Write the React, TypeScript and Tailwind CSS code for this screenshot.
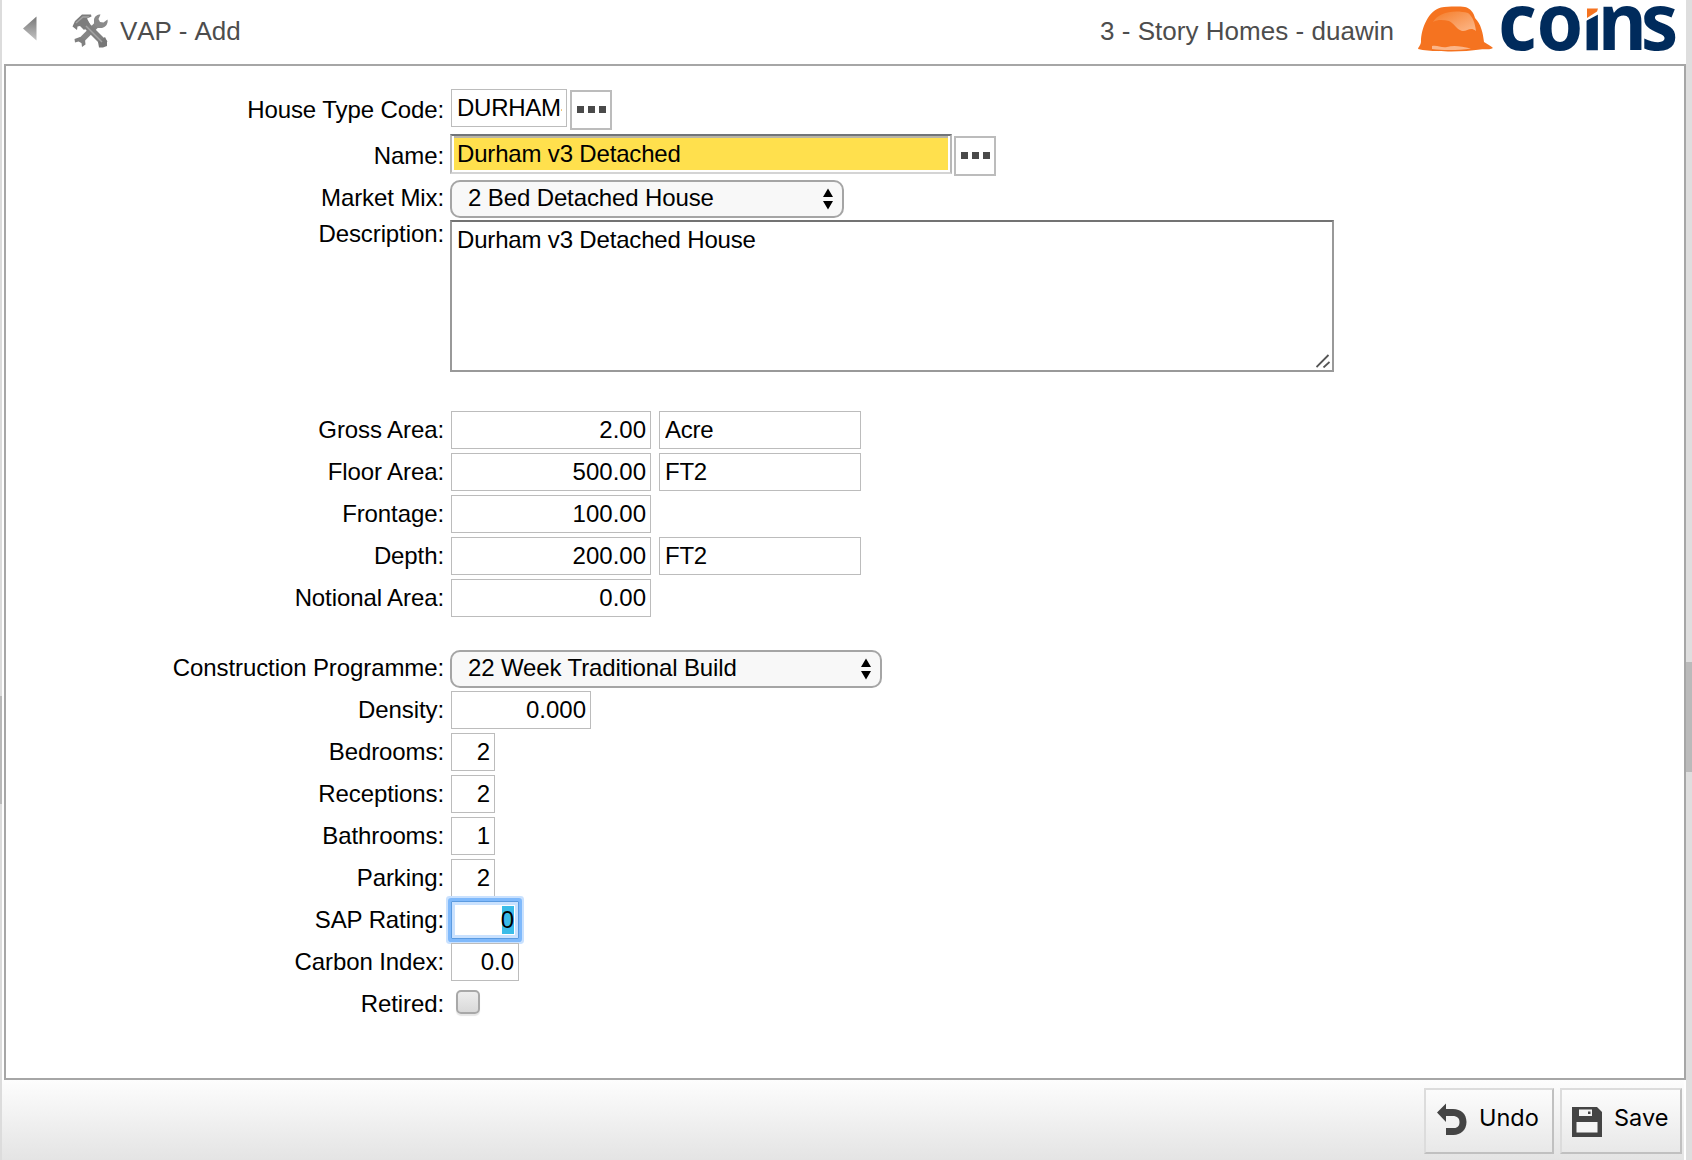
import type { ReactNode } from "react";

function Row({ label, className = "h-[42px]", labelClass = "leading-[37px]", children }: {
  label: string;
  className?: string;
  labelClass?: string;
  children: ReactNode;
}) {
  return (
    <div className={`flex items-start ${className}`}>
      <div className={`w-[438px] shrink-0 text-right tracking-[-0.1px] whitespace-nowrap ${labelClass}`}>{label}:</div>
      <div className="ml-[7px] flex items-start">{children}</div>
    </div>
  );
}

function Field({ value, width, left = false }: { value: string; width: string; left?: boolean }) {
  return (
    <div
      className={`h-[38px] border border-[#bcbcbc] bg-white pr-1 leading-[35px] ${
        left ? "pl-[5px] text-left tracking-[-0.25px]" : "text-right"
      } ${width}`}
    >
      <div className="overflow-hidden whitespace-nowrap">{value}</div>
    </div>
  );
}

function LookupButton({ className }: { className: string }) {
  return (
    <button
      aria-label="Look up"
      className={`flex h-10 w-[42px] items-center justify-center gap-1 border-2 border-[#bcbcbc] bg-white pb-[2px] ${className}`}
    >
      <span className="size-[7px] bg-[#4a4a4a]" />
      <span className="size-[7px] bg-[#4a4a4a]" />
      <span className="size-[7px] bg-[#4a4a4a]" />
    </button>
  );
}

function Select({ value, width }: { value: string; width: string }) {
  return (
    <div
      className={`-ml-px flex h-[38px] items-start justify-between rounded-[10px] border-2 border-[#a5a5a5] bg-[#f8f8f8] pr-2 pl-4 ${width}`}
    >
      <span className="leading-[32px] tracking-[-0.12px]">{value}</span>
      <svg className="mt-[6px]" width="12" height="22" viewBox="0 0 12 22">
        <path d="M6 0.5 11 9H1zM6 21.5 11 13H1z" fill="#000" />
      </svg>
    </div>
  );
}

function ToolsIcon() {
  return (
    <svg width="36" height="36" viewBox="0 0 36 36" fill="none">
      <path d="M27 9.500 8 28.500" stroke="#858585" strokeWidth="6" />
      <path
        d="M28.500 1.500 26.500 6l1.500 3 3.500.5 4-3c.8 4-1.500 7.500-5.500 8.500h-4.500L22 11.500V6.500c.5-3 3-5 6.500-5z"
        fill="#8a8a8a"
      />
      <path d="M2.500 26 8 24l5 2.500.5 5-3.500 2.500-.5-4-3-1.500-3.500 1z" fill="#808080" />
      <path d="M13 11 33 31" stroke="#808080" strokeWidth="7" />
      <path d="M26 29l7-5 2 4v5l-4 1.500h-4z" fill="#777" />
      <path d="M.5 13.500 3 8l7-6.500 9 .0.5 2-4.500 2 3 5.500-6 6-4-4-2.500.5-.5 3.500z" fill="#7c7c7c" />
      <path d="M4 10 11 4h6M14 13l16 16" stroke="#a3a3a3" strokeWidth="1.500" />
    </svg>
  );
}

function CoinsLogo() {
  return (
    <svg width="262" height="56" viewBox="0 0 262 56" aria-label="coins">
      <defs>
        <linearGradient id="shine" x1="0" y1="0" x2="1" y2="1">
          <stop offset="0" stopColor="#f57c28" />
          <stop offset="1" stopColor="#fcb98c" />
        </linearGradient>
        <clipPath id="word">
          <rect x="80" y="6" width="182" height="50" />
        </clipPath>
      </defs>
      <path
        d="M1 49C1 47 4 45 4 42 4 28 12 10 24 7.500c7-1.200 18-1.200 24-.5 5 1 9 6 10 11 6 6 8 15 9 24 3 2 7 4 9 6-3 2-9 1-13 1.500-12 2-30 2.500-42 1.500-7 0-14-.5-20-2z"
        fill="#f57320"
      />
      <path d="M16 22c5-9 20-13 35-9 5 4 7 10 8 18-6-5-9 1-14 0-6-2-8-8-13-10-5-1-11-2-16 1z" fill="url(#shine)" />
      <path d="M15 46c6-1 9 2 15 1 6-2 14-1 24 1.500-12 2-29 2-39 .5z" fill="#fbb588" />
      <g clipPath="url(#word)">
        <text
          transform="scale(.95 1)"
          x="85.200 125.700 172.600 190.500 235.500"
          y="50"
          fontFamily="'Noto Sans', 'Open Sans', sans-serif"
          fontWeight="700"
          fontSize="79"
          fill="#002b5c"
        >
          coins
        </text>
        <path d="M167 0h17v13l-17 9z" fill="#fff" />
        <path d="M170 8.500h11l-1 3-10 6.500z" fill="#f57320" />
      </g>
    </svg>
  );
}

function UndoIcon() {
  return (
    <svg width="30" height="34" viewBox="0 0 30 34">
      <path d="M0 9.500 9 0.500V6h7c8 0 13.500 5 13.500 13s-6 13-13 13H9v-7h8c4 0 5.500-2.500 5.500-6s-2-6-7-6H9v6z" fill="#444" />
    </svg>
  );
}

function SaveIcon() {
  return (
    <svg width="30" height="30" viewBox="0 0 30 30">
      <path d="M0 0h25l5 5v25H0z" fill="#444" />
      <path d="M7 2.500h13v6.500H7zM4.500 15h21v10.500h-21z" fill="#f5f5f5" />
      <path d="M16 4.500h2.500v2.500H16z" fill="#444" />
    </svg>
  );
}

const counts = [
  { label: "Density", value: "0.000", width: "w-[140px]" },
  { label: "Bedrooms", value: "2", width: "w-[44px]" },
  { label: "Receptions", value: "2", width: "w-[44px]" },
  { label: "Bathrooms", value: "1", width: "w-[44px]" },
  { label: "Parking", value: "2", width: "w-[44px]" },
];

const areas = [
  { label: "Gross Area", value: "2.00", unit: "Acre" },
  { label: "Floor Area", value: "500.00", unit: "FT2" },
  { label: "Frontage", value: "100.00" },
  { label: "Depth", value: "200.00", unit: "FT2" },
  { label: "Notional Area", value: "0.00" },
];

export default function App() {
  return (
    <div className="flex h-[1160px] w-[1692px] overflow-hidden bg-white font-['Liberation_Sans',Arial,sans-serif] text-[24px] text-black">
      <div className="w-[2px] shrink-0 bg-[#dcdcdc] pt-[696px]">
        <div className="h-[108px] bg-[#b9b9b9]" />
      </div>

      <div className="flex w-[1684px] flex-col">
        <header className="flex h-16 shrink-0 text-[26px] leading-[62px] text-[#4d4d4d] [font-kerning:none]">
          <svg className="mt-[16px] ml-[21px]" width="14" height="26" viewBox="0 0 14 26">
            <defs>
              <linearGradient id="back" x1="0" y1="0" x2="0" y2="1">
                <stop offset="0" stopColor="#777" />
                <stop offset="1" stopColor="#c4c4c4" />
              </linearGradient>
            </defs>
            <path d="M13.500 0.500v24L0 12.500z" fill="url(#back)" />
          </svg>
          <div className="mt-[13px] ml-[35px]">
            <ToolsIcon />
          </div>
          <h1 className="ml-[12px] tracking-[-0.1px]">VAP - Add</h1>
          <div className="mr-[23px] ml-auto tracking-[0.03px]">3 - Story Homes - duawin</div>
          <div className="mr-[7px] h-14">
            <CoinsLogo />
          </div>
        </header>

        <main className="ml-[2px] h-[1016px] w-[1682px] shrink-0 border-2 border-[#a6a6a6] bg-white pt-[23px]">
          <Row label="House Type Code" className="h-[45px]" labelClass="leading-[41px]">
            <Field value="DURHAM-" width="w-[116px]" left />
            <LookupButton className="mt-px ml-[3px]" />
          </Row>
          <Row label="Name" className="h-[46px]" labelClass="leading-[43px]">
            <div className="-ml-px h-10 w-[502px] border-2 border-[#d4d4d4] border-t-[#727578] border-l-[#b8b8b8] border-r-[#b8b8b8] bg-white p-[2px] pt-0">
              <div className="h-[34px] border-t-2 border-[#b9b5a8] bg-[#ffe04d] pl-[3px] leading-[31px] tracking-[-0.17px]">
                Durham v3 Detached
              </div>
            </div>
            <LookupButton className="mt-[2px] ml-[2px]" />
          </Row>
          <Row label="Market Mix" className="h-10" labelClass="leading-[36px]">
            <Select value="2 Bed Detached House" width="w-[394px]" />
          </Row>
          <Row label="Description" className="h-[191px]" labelClass="leading-[27px]">
            <div className="-ml-px flex h-[152px] w-[884px] flex-col justify-between border-2 border-[#999] border-t-[#737373] bg-white pl-[5px]">
              <p className="leading-[36px] tracking-[-0.17px]">Durham v3 Detached House</p>
              <svg className="mr-[2px] mb-[2px] self-end" width="14" height="14" viewBox="0 0 14 14">
                <path d="M.5 13 12.500 1M7.500 13.500 13.500 8" stroke="#555" strokeWidth="1.800" />
              </svg>
            </div>
          </Row>

          {areas.map((a) => (
            <Row key={a.label} label={a.label}>
              <Field value={a.value} width="w-[200px]" />
              {a.unit && (
                <div className="ml-2">
                  <Field value={a.unit} width="w-[202px]" left />
                </div>
              )}
            </Row>
          ))}

          <Row label="Construction Programme" className="mt-[29px] h-[41px]" labelClass="leading-[36px]">
            <Select value="22 Week Traditional Build" width="w-[432px]" />
          </Row>
          {counts.map((c) => (
            <Row key={c.label} label={c.label}>
              <Field value={c.value} width={c.width} />
            </Row>
          ))}
          <Row label="SAP Rating">
            <div className="flex h-[38px] w-[68px] justify-end rounded-[1px] border border-[#5b9be0] bg-white pt-[4px] pr-[4px] shadow-[0_0_0_3px_#7fb9fb,0_0_0_5px_#c9e1fe,inset_0_0_0_3px_#c9e1fe]">
              <span className="flex h-[28px] w-[12px] justify-end bg-[#3bbce8] leading-[27px]">0</span>
            </div>
          </Row>
          <Row label="Carbon Index">
            <Field value="0.0" width="w-[68px]" />
          </Row>
          <Row label="Retired">
            <div className="mt-[5px] ml-[5px] size-6 rounded-[5px] border-2 border-[#a8a8a8] bg-linear-to-b from-[#ededed] to-[#d9d9d9] shadow-[0_2px_1px_#e6e6e6]" />
          </Row>
        </main>

        <footer className="flex h-20 w-[1682px] items-start justify-end gap-[6px] bg-linear-to-b from-[#fdfdfd] to-[#e4e4e4] pt-2 pr-[2px] font-[Inter,sans-serif] text-[23.5px]">
          <button className="flex h-[66px] w-[130px] items-start border-2 border-[#c0c0c0] border-t-[#dcdcdc] border-l-[#dcdcdc] bg-linear-to-b from-[#fcfcfc] to-[#e8e8e8] pl-[11px]">
            <span className="mt-[13px]">
              <UndoIcon />
            </span>
            <span className="ml-[12px] leading-[56px]">Undo</span>
          </button>
          <button className="flex h-[66px] w-[122px] items-start border-2 border-[#c0c0c0] border-t-[#dcdcdc] border-l-[#dcdcdc] bg-linear-to-b from-[#fcfcfc] to-[#e8e8e8] pl-[10px]">
            <span className="mt-[17px]">
              <SaveIcon />
            </span>
            <span className="ml-[12px] leading-[56px]">Save</span>
          </button>
        </footer>
      </div>

      <div className="w-[6px] shrink-0 bg-[#dedede] pt-[662px]">
        <div className="h-[110px] bg-[#bababa]" />
      </div>
    </div>
  );
}
